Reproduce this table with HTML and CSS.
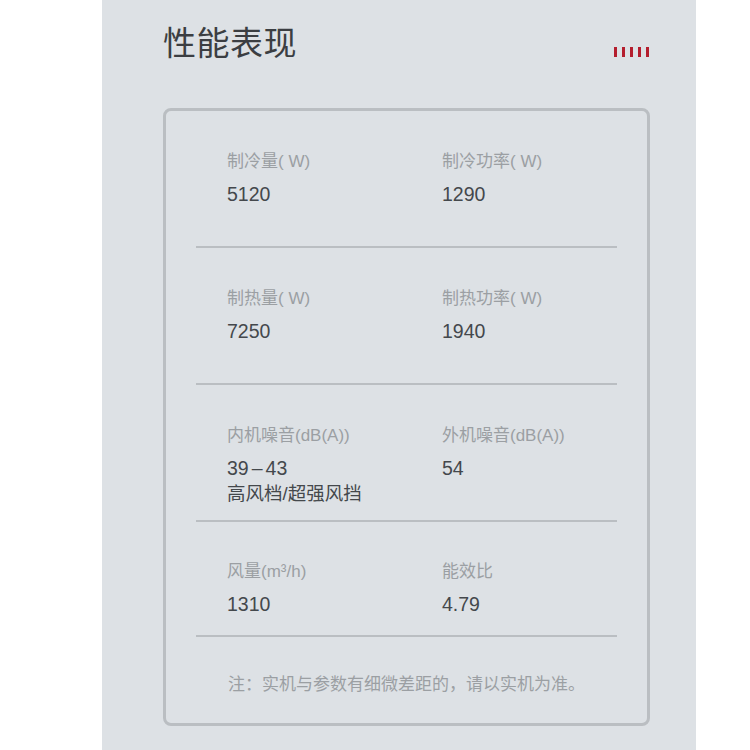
FILE: index.html
```html
<!DOCTYPE html>
<html lang="zh-CN">
<head>
    <meta charset="UTF-8">
    <meta name="viewport" content="width=device-width, initial-scale=1.0">
    <title>性能表现</title>
    <link rel="stylesheet" href="styles.css">
</head>
<body>
    <div class="panel">
        <div class="panel-head">
            <h1 class="panel-title">性能表现</h1>
            <div class="bars">
                <span></span><span></span><span></span><span></span><span></span>
            </div>
        </div>

        <div class="spec-card">
            <div class="spec-row">
                <div class="spec">
                    <div class="spec-label">制冷量( W)</div>
                    <div class="spec-value">5120</div>
                </div>
                <div class="spec">
                    <div class="spec-label">制冷功率( W)</div>
                    <div class="spec-value">1290</div>
                </div>
            </div>

            <div class="spec-row">
                <div class="spec">
                    <div class="spec-label">制热量( W)</div>
                    <div class="spec-value">7250</div>
                </div>
                <div class="spec">
                    <div class="spec-label">制热功率( W)</div>
                    <div class="spec-value">1940</div>
                </div>
            </div>

            <div class="spec-row">
                <div class="spec">
                    <div class="spec-label">内机噪音(dB(A))</div>
                    <div class="spec-value">39<span class="dash">–</span>43</div>
                    <div class="spec-extra">高风档/超强风挡</div>
                </div>
                <div class="spec">
                    <div class="spec-label">外机噪音(dB(A))</div>
                    <div class="spec-value">54</div>
                </div>
            </div>

            <div class="spec-row spec-row-last">
                <div class="spec">
                    <div class="spec-label">风量(m³/h)</div>
                    <div class="spec-value">1310</div>
                </div>
                <div class="spec">
                    <div class="spec-label">能效比</div>
                    <div class="spec-value">4.79</div>
                </div>
            </div>

            <p class="spec-note">注：实机与参数有细微差距的，请以实机为准。</p>
        </div>
    </div>
</body>
</html>
```

FILE: styles.css
```css
/* Base */
body {
    margin: 0;
    background: #ffffff;
    font-family: "Liberation Sans", "Noto Sans CJK SC", sans-serif;
}

/* Gray panel */
.panel {
    margin-left: 102px;
    width: 594px;
    min-height: 750px;
    box-sizing: border-box;
    padding: 21px 46px 0 61px;
    background: #dde1e5;
}

.panel-head {
    display: flex;
    justify-content: space-between;
    align-items: flex-start;
    margin-bottom: 47px;
}

.panel-title {
    margin: 0;
    font-family: "Noto Sans CJK SC", sans-serif;
    font-size: 33px;
    font-weight: 400;
    line-height: 40px;
    color: #3b3e42;
    letter-spacing: 0.5px;
}

/* Red marker bars */
.bars {
    display: flex;
    gap: 5px;
    margin-top: 26px;
    margin-right: 1px;
}

.bars span {
    width: 3px;
    height: 10px;
    background: #b41e2e;
}

/* Spec card */
.spec-card {
    border: 3px solid #babec2;
    border-radius: 8px;
    padding: 0 30px 28px;
}

.spec-row {
    display: grid;
    grid-template-columns: 215px 1fr;
    height: 137px;
    box-sizing: border-box;
    padding: 39px 0 0 31px;
    border-bottom: 2px solid #babec2;
}

.spec-row-last {
    height: 115px;
    padding-top: 38px;
}

.spec-label {
    font-size: 17px;
    line-height: 24px;
    color: #9b9fa3;
}

.spec-value {
    margin-top: 6px;
    font-size: 19.5px;
    line-height: 28px;
    color: #44484c;
}

.dash {
    margin: 0 3px;
}

.spec-extra {
    font-size: 18.5px;
    line-height: 24px;
    color: #44484c;
}

.spec-note {
    margin: 34px 0 0;
    text-align: center;
    font-family: "Noto Sans CJK SC", sans-serif;
    font-size: 17px;
    line-height: 24px;
    color: #9b9fa3;
}
```
